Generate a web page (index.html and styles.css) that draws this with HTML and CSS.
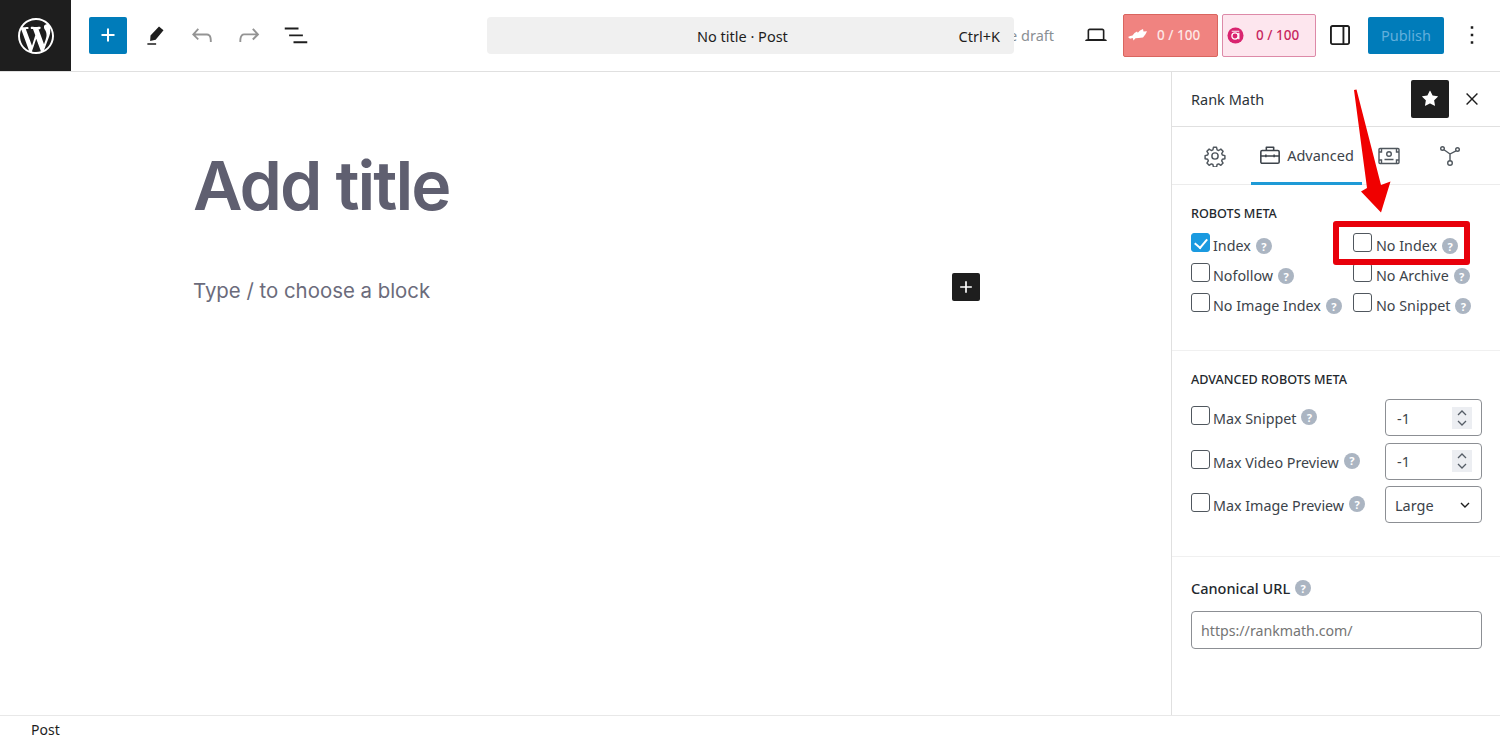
FILE: index.html
```html
<!DOCTYPE html>
<html lang="en">
<head>
  <meta charset="UTF-8" />
  <meta name="viewport" content="width=device-width, initial-scale=1.0"/>
  <title>Add New Post - Rank Math</title>
  <link rel="stylesheet" href="styles.css">
</head>
<body>

<!-- TOP BAR -->
<header class="topbar">
  <a class="logo" href="#">
    <svg width="36" height="36" viewBox="0 0 20 20"><path fill="#fff" d="M20 10c0-5.51-4.49-10-10-10C4.48 0 0 4.49 0 10c0 5.52 4.48 10 10 10 5.51 0 10-4.48 10-10zM7.78 15.37L4.37 6.22c.55-.02 1.17-.08 1.17-.08.5-.06.44-1.13-.06-1.11 0 0-1.45.11-2.37.11-.18 0-.37 0-.58-.01C4.12 2.69 6.87 1.11 10 1.11c2.33 0 4.45.87 6.05 2.34-.68-.11-1.65.39-1.65 1.58 0 .74.45 1.36.9 2.1.35.61.55 1.36.55 2.46 0 1.49-1.4 5-1.4 5l-3.03-8.37c.54-.02.82-.17.82-.17.5-.05.44-1.25-.06-1.22 0 0-1.44.12-2.38.12-.87 0-2.33-.12-2.33-.12-.5-.03-.56 1.2-.06 1.22l.92.08 1.26 3.41zM17.41 10c.24-.64.74-1.87.43-4.25.7 1.29 1.05 2.71 1.05 4.25 0 3.29-1.73 6.24-4.4 7.78.97-2.59 1.94-5.2 2.92-7.78zM6.1 18.09C3.12 16.65 1.11 13.53 1.11 10c0-1.3.23-2.48.72-3.59C3.25 10.3 4.67 14.2 6.1 18.09zm4.03-6.63l2.58 6.98c-.86.29-1.76.45-2.71.45-.79 0-1.57-.11-2.29-.33.81-2.38 1.62-4.74 2.42-7.1z"/></svg>
  </a>

  <button class="add-btn">
    <svg width="24" height="24" viewBox="0 0 24 24"><path fill="#fff" d="M11 5.5h2V11h5.5v2H13v5.5h-2V13H5.5v-2H11z"/></svg>
  </button>
  <button class="icon-btn">
    <svg width="30" height="30" viewBox="0 0 24 24"><path fill="#1e1e1e" d="M15.2 5.2l3.6 2.9-6.3 7.6-4.4 1 .3-4.4zM5.9 18.5h7v1.2h-7z"/></svg>
  </button>
  <button class="icon-btn">
    <svg width="30" height="30" viewBox="0 0 24 24"><path fill="#949494" d="M18.3 11.7c-.6-.6-1.4-.9-2.3-.9H6.7l2.9-3.3-1.1-1-4.5 5L8.5 16l1-1-2.7-2.7H16c.5 0 .9.2 1.3.5 1 1 1 3.4 1 4.5v.3h1.5v-.2c0-1.5 0-4.3-1.5-5.7z"/></svg>
  </button>
  <button class="icon-btn">
    <svg width="30" height="30" viewBox="0 0 24 24"><path fill="#949494" d="M15.6 6.5l-1.1 1 2.9 3.3H8c-.9 0-1.7.3-2.3.9-1.4 1.5-1.4 4.2-1.4 5.6v.2h1.5v-.3c0-1.1 0-3.5 1-4.5.3-.3.7-.5 1.3-.5h9.2L14.5 15l1.1 1.1 4.6-4.6-4.6-5z"/></svg>
  </button>
  <button class="icon-btn">
    <svg width="30" height="30" viewBox="0 0 24 24"><path fill="#1e1e1e" d="M3 6h11v1.5H3V6zm3.5 5.5h11V13h-11v-1.5zM21 17H10v1.5h11V17z"/></svg>
  </button>

  <div class="topbar-right">
    <span class="save-draft">Save draft</span>
    <button class="icon-btn view-btn">
      <svg width="26" height="26" viewBox="0 0 24 24"><path fill="#1e1e1e" d="M20.5 16h-.7V8c0-1.1-.9-2-2-2H6.2c-1.1 0-2 .9-2 2v8h-.7c-.8 0-1.5.7-1.5 1.5h20c0-.8-.7-1.5-1.5-1.5zM5.7 8c0-.3.2-.5.5-.5h11.6c.3 0 .5.2.5.5v7.6H5.7V8z"/></svg>
    </button>
    <div class="score score-seo">
      <svg width="20" height="14" viewBox="0 0 20 14"><path fill="#fff" d="M0 9c1.500-1 3-1.200 4.500-1.500L6.500 5 9 3.500l.8 1.200L12 2.500 15 1l.5 2.500 3.500-.3-1.500 3L15 9.500l-4.500.5-3 .2-2 2.300-.8-2.500-2.700.7z"/></svg>
      <span>0 / 100</span>
    </div>
    <div class="score score-ai">
      <svg width="17" height="17" viewBox="0 0 18 18"><circle cx="9" cy="9" r="8.500" fill="#d9246f"/><circle cx="8.500" cy="9.500" r="3.300" fill="none" stroke="#fff" stroke-width="1.400"/><path d="M12.500 6v7" stroke="#fff" stroke-width="1.400"/><path d="M5 4.500h8" stroke="#fff" stroke-width="1"/></svg>
      <span>0 / 100</span>
    </div>
    <button class="icon-btn panel-btn">
      <svg width="30" height="30" viewBox="0 0 24 24"><path fill="#1e1e1e" d="M18 4H6c-1.100 0-2 .9-2 2v12c0 1.100.9 2 2 2h12c1.100 0 2-.9 2-2V6c0-1.100-.9-2-2-2zm-4 14.500H6c-.3 0-.5-.2-.5-.5V6c0-.3.2-.5.5-.5h8v13zm4.500-.5c0 .3-.2.5-.5.5h-2.500v-13H18c.3 0 .5.2.5.5v12z"/></svg>
    </button>
    <button class="publish-btn">Publish</button>
    <button class="icon-btn more-btn">
      <svg width="30" height="30" viewBox="0 0 24 24"><path fill="#1e1e1e" d="M13 19h-2v-2h2v2zm0-6h-2v-2h2v2zm0-6h-2V5h2v2z"/></svg>
    </button>
  </div>

  <!-- command bar sits over the save draft link -->
  <div class="command-bar">
    <span>No title · Post</span>
    <span>Ctrl+K</span>
  </div>
</header>

<div class="workspace">

  <!-- EDITOR -->
  <main class="canvas">
    <h1 class="post-title">Add title</h1>
    <div class="block-row">
      <p class="block-hint">Type / to choose a block</p>
      <button class="block-add">
        <svg width="20" height="20" viewBox="0 0 24 24"><path fill="#fff" d="M11 5h2v6h6v2h-6v6h-2v-6H5v-2h6z"/></svg>
      </button>
    </div>
  </main>

  <!-- RANK MATH SIDEBAR -->
  <aside class="sidebar">
    <div class="side-head">
      <span class="side-title">Rank Math</span>
      <button class="star-btn">
        <svg width="26" height="26" viewBox="0 0 24 24"><path fill="#fff" d="M11.776 4.454a.25.25 0 01.448 0l2.069 4.192a.25.25 0 00.188.137l4.626.672a.25.25 0 01.139.426l-3.348 3.263a.25.25 0 00-.072.222l.79 4.607a.25.25 0 01-.362.263l-4.138-2.175a.25.25 0 00-.232 0l-4.138 2.175a.25.25 0 01-.363-.263l.79-4.607a.25.25 0 00-.071-.222L4.754 9.881a.25.25 0 01.139-.426l4.626-.672a.25.25 0 00.188-.137l2.069-4.192z"/></svg>
      </button>
      <button class="close-btn">
        <svg width="20" height="20" viewBox="0 0 24 24"><path fill="#1e1e1e" d="M13.200 12l5.900-6-1.200-1.200-5.900 6-5.900-6L4.900 6l5.900 6-5.900 6 1.200 1.200 5.900-6 5.900 6 1.200-1.200z"/></svg>
      </button>
    </div>

    <div class="tabs">
      <div class="tab tab-gear">
        <svg width="22" height="22" viewBox="0 0 24 24" fill="none" stroke="#50575e" stroke-width="1.600" stroke-linejoin="round"><circle cx="12" cy="12" r="3.400"/><path d="M10.300 2.500h3.400l.6 2.800 1.700.7 2.400-1.500 2.400 2.400-1.500 2.400.7 1.700 2.800.6v3.400l-2.800.6-.7 1.700 1.500 2.400-2.400 2.400-2.400-1.500-1.700.7-.6 2.800h-3.400l-.6-2.800-1.700-.7-2.400 1.500-2.400-2.400 1.500-2.400-.7-1.700-2.800-.6v-3.400l2.800-.6.7-1.700-1.500-2.400 2.400-2.400 2.400 1.500 1.700-.7z"/></svg>
      </div>
      <div class="tab tab-active">
        <svg width="22" height="22" viewBox="0 0 24 24" fill="none" stroke="#3c434a" stroke-width="1.700" stroke-linejoin="round"><rect x="2" y="7" width="20" height="14" rx="1.500"/><path d="M8 7V3.500h8V7M2 13h20M7.500 11.500v3M16.500 11.500v3"/></svg>
        <span>Advanced</span>
      </div>
      <div class="tab tab-money">
        <svg width="22" height="18" viewBox="0 0 22 18" fill="none" stroke="#50575e" stroke-width="1.400"><rect x="1" y="1.500" width="20" height="15" rx="1"/><circle cx="11" cy="7" r="2.300"/><path d="M6.500 12.500h9M1 5h2.500V1.500M21 5h-2.500V1.500M1 13h2.500v3.500M21 13h-2.500v3.500"/></svg>
      </div>
      <div class="tab tab-schema">
        <svg width="22" height="22" viewBox="0 0 22 22" fill="none" stroke="#50575e" stroke-width="1.400"><circle cx="3.500" cy="3.500" r="1.800"/><circle cx="18.500" cy="4.500" r="1.800"/><circle cx="11" cy="18" r="2.300"/><path d="M5 4.800l6 4.200 6-3.200M11 9v6.700"/></svg>
      </div>
    </div>

    <section class="section section-robots">
      <h3 class="section-title">ROBOTS META</h3>
      <div class="robots-grid">
        <label class="check"><input type="checkbox" checked><span>Index</span><i class="help">?</i></label>
        <label class="check"><input type="checkbox"><span>No Index</span><i class="help">?</i></label>
        <label class="check"><input type="checkbox"><span>Nofollow</span><i class="help">?</i></label>
        <label class="check"><input type="checkbox"><span>No Archive</span><i class="help">?</i></label>
        <label class="check"><input type="checkbox"><span>No Image Index</span><i class="help">?</i></label>
        <label class="check"><input type="checkbox"><span>No Snippet</span><i class="help">?</i></label>
      </div>
    </section>

    <section class="section section-advanced">
      <h3 class="section-title">ADVANCED ROBOTS META</h3>
      <div class="advanced-grid">
        <label class="check"><input type="checkbox"><span>Max Snippet</span><i class="help">?</i></label>
        <div class="field">
          <span>-1</span>
          <span class="spin"><svg width="12" height="20" viewBox="0 0 12 20" fill="none" stroke="#555d66" stroke-width="1.300"><path d="M2 7l4-4 4 4M2 13l4 4 4-4"/></svg></span>
        </div>
        <label class="check"><input type="checkbox"><span>Max Video Preview</span><i class="help">?</i></label>
        <div class="field">
          <span>-1</span>
          <span class="spin"><svg width="12" height="20" viewBox="0 0 12 20" fill="none" stroke="#555d66" stroke-width="1.300"><path d="M2 7l4-4 4 4M2 13l4 4 4-4"/></svg></span>
        </div>
        <label class="check"><input type="checkbox"><span>Max Image Preview</span><i class="help">?</i></label>
        <div class="field field-select">
          <span>Large</span>
          <svg class="chevron" width="10" height="6" viewBox="0 0 10 6" fill="none" stroke="#1e1e1e" stroke-width="1.400"><path d="M1 1l4 4 4-4"/></svg>
        </div>
      </div>
    </section>

    <section class="section section-canonical">
      <label class="canonical-label">Canonical URL <i class="help">?</i></label>
      <input class="canonical-input" type="text" placeholder="https://rankmath.com/">
    </section>
  </aside>
</div>

<!-- FOOTER -->
<footer class="footer">Post</footer>

<!-- ANNOTATIONS drawn over the screenshot -->
<div class="mark-box"></div>
<svg class="mark-arrow" width="50" height="130" viewBox="1345 86 50 130"><path fill="#f00000" d="M1354 90l2.500-.5L1381 185l9.500-3.500-9.500 31-20-21 6-3.500z"/></svg>

</body>
</html>
```

FILE: styles.css
```css
* {
  box-sizing: border-box;
}
body {
  margin: 0;
  height: 743px;
  overflow: hidden;
  position: relative;
  display: flex;
  flex-direction: column;
  font-family: "Noto Sans", sans-serif;
  font-size: 14.5px;
  color: #2c3338;
  background: #fff;
}
button {
  border: none;
  background: none;
  padding: 0;
  font: inherit;
  display: flex;
  align-items: center;
  justify-content: center;
}

/* top bar */
.topbar {
  height: 72px;
  flex: none;
  display: flex;
  align-items: center;
  border-bottom: 1px solid #e0e0e0;
  padding-bottom: 1px;
  position: relative;
}
.logo {
  width: 71px;
  height: 71px;
  margin-bottom: -1px;
  background: #1e1e1e;
  display: flex;
  align-items: center;
  justify-content: center;
}
.add-btn {
  width: 38px;
  height: 37px;
  margin-left: 18px;
  margin-right: 4px;
  background: #007cba;
  border-radius: 2px;
}
.icon-btn {
  width: 47px;
  height: 37px;
}
.topbar-right {
  margin-left: auto;
  display: flex;
  align-items: center;
  padding-right: 13px;
}
.save-draft {
  color: #8a8f94;
}
.view-btn {
  margin-left: 18px;
  margin-right: 4px;
}
.score {
  height: 43px;
  display: flex;
  align-items: center;
  gap: 9px;
  padding-left: 4px;
  border-radius: 2px;
  font-size: 13.5px;
  font-weight: 500;
}
.score-seo {
  width: 95px;
  background: #f08380;
  border: 1px solid #d9655f;
  color: #fde8e7;
}
.score-ai {
  width: 94px;
  margin-left: 4px;
  padding-left: 4px;
  gap: 12px;
  background: #fde6ee;
  border: 1px solid #dd8aa8;
  color: #c8275f;
}
.panel-btn {
  width: 30px;
  margin-left: 9px;
  margin-right: 13px;
}
.publish-btn {
  width: 76px;
  height: 37px;
  background: #007cba;
  color: #62afdc;
  border-radius: 2px;
}
.more-btn {
  width: 30px;
  margin-left: 13px;
}
.command-bar {
  position: absolute;
  left: 487px;
  top: 17px;
  width: 527px;
  height: 37px;
  padding: 1px 14px 0 210px;
  display: flex;
  align-items: center;
  justify-content: space-between;
  background: #f0f0f0;
  border-radius: 4px;
  color: #1e1e1e;
}

/* editor */
.workspace {
  flex: 1;
  display: flex;
  min-height: 0;
}
.canvas {
  flex: 1;
  padding: 71px 191px 0 193px;
}
.post-title {
  margin: 0;
  font-family: Inter, sans-serif;
  font-size: 68px;
  font-weight: 600;
  line-height: 84px;
  letter-spacing: -2px;
  color: #5f5f70;
}
.block-row {
  margin-top: 46px;
  display: flex;
  align-items: flex-start;
  justify-content: space-between;
}
.block-hint {
  margin: 8px 0 0;
  font-family: Inter, sans-serif;
  font-size: 20.4px;
  line-height: 20px;
  color: #6b6b7b;
}
.block-add {
  width: 28px;
  height: 28px;
  background: #1e1e1e;
  border-radius: 2px;
}

/* sidebar */
.sidebar {
  width: 329px;
  flex: none;
  border-left: 1px solid #e0e0e0;
}
.side-head {
  height: 55px;
  padding: 0 13px 0 19px;
  display: flex;
  align-items: center;
  border-bottom: 1px solid #e0e0e0;
}
.side-title {
  flex: 1;
  color: #2c3338;
}
.star-btn {
  width: 38px;
  height: 38px;
  background: #1e1e1e;
  border-radius: 2px;
  margin-right: 8px;
}
.close-btn {
  width: 30px;
  height: 30px;
}
.tabs {
  height: 58px;
  padding-left: 7px;
  display: flex;
  border-bottom: 1px solid #ececec;
}
.tab {
  height: 58px;
  display: flex;
  align-items: center;
  justify-content: center;
  color: #3c434a;
}
.tab-gear {
  width: 72px;
}
.tab-active {
  width: 111px;
  gap: 6px;
  border-bottom: 3px solid #1e9ad6;
}
.tab-money {
  width: 54px;
}
.tab-schema {
  width: 68px;
}
.section {
  padding: 0 18px 0 19px;
  border-bottom: 1px solid #f0f0f0;
}
.section-title {
  margin: 0;
  font-size: 12.6px;
  font-weight: 500;
  line-height: 17px;
  color: #23282d;
}
.section-robots {
  height: 166px;
  padding-top: 20px;
}
.robots-grid {
  margin-top: 9px;
  display: grid;
  grid-template-columns: 162px 1fr;
  grid-auto-rows: 30px;
}
.robots-grid .check:nth-child(even) input {
  margin-right: 4px;
}
.check {
  display: flex;
  align-items: flex-start;
  font-size: 14.3px;
  line-height: 30px;
  color: #3c434a;
  white-space: nowrap;
}
.check input {
  appearance: none;
  width: 19px;
  height: 19px;
  margin: 2px 3px 0 0;
  flex: none;
  border: 1px solid #50575e;
  border-radius: 3px;
  background: #fff;
  position: relative;
}
.check input:checked {
  background: #1a9ae0;
  border-color: #1a9ae0;
}
.check input:checked::before {
  content: "";
  position: absolute;
  left: 5px;
  top: 2px;
  width: 6px;
  height: 10px;
  border: solid #fff;
  border-width: 0 2px 2px 0;
  transform: rotate(40deg);
}
.help {
  width: 16px;
  height: 16px;
  flex: none;
  margin: 7px 0 0 5px;
  display: flex;
  align-items: center;
  justify-content: center;
  border-radius: 50%;
  background: #abb5c2;
  color: #fff;
  font-style: normal;
  font-size: 11px;
  font-weight: 700;
  line-height: 1;
}
.section-advanced {
  height: 206px;
  padding-top: 20px;
}
.advanced-grid {
  margin-top: 11px;
  display: grid;
  grid-template-columns: 1fr 97px;
  grid-auto-rows: 37px;
  row-gap: 6.5px;
  align-items: center;
}
.advanced-grid .check {
  height: 37px;
  line-height: 39px;
}
.advanced-grid .check input {
  margin-top: 7px;
}
.advanced-grid .help {
  margin-top: 10px;
}
.field {
  height: 37px;
  padding: 0 9px 0 11px;
  display: flex;
  align-items: center;
  justify-content: space-between;
  border: 1px solid #8c8f94;
  border-radius: 4px;
  color: #3c434a;
}
.field-select {
  padding-left: 9px;
}
.spin {
  width: 20px;
  height: 22px;
  display: flex;
  align-items: center;
  justify-content: center;
  background: #eceef2;
}
.chevron {
  margin-right: 2px;
}
.section-canonical {
  padding-top: 21px;
  border-bottom: none;
}
.canonical-label {
  display: flex;
  line-height: 20px;
  font-weight: 500;
  color: #23282d;
}
.canonical-label .help {
  margin: 2px 0 0 5px;
}
.canonical-input {
  display: block;
  width: 100%;
  height: 38px;
  margin-top: 13px;
  padding: 0 9px;
  border: 1px solid #8c8f94;
  border-radius: 4px;
  font: inherit;
  font-size: 14.2px;
}
.canonical-input::placeholder {
  color: #757575;
}

/* footer */
.footer {
  height: 28px;
  flex: none;
  padding-left: 31px;
  display: flex;
  align-items: center;
  border-top: 1px solid #e8e8e8;
  font-size: 14px;
  color: #1e1e1e;
}

/* red annotations */
.mark-box {
  position: absolute;
  left: 1333px;
  top: 221px;
  width: 137px;
  height: 44px;
  border: 6px solid #e8000b;
  border-radius: 3px;
}
.mark-arrow {
  position: absolute;
  left: 1345px;
  top: 86px;
}
```
